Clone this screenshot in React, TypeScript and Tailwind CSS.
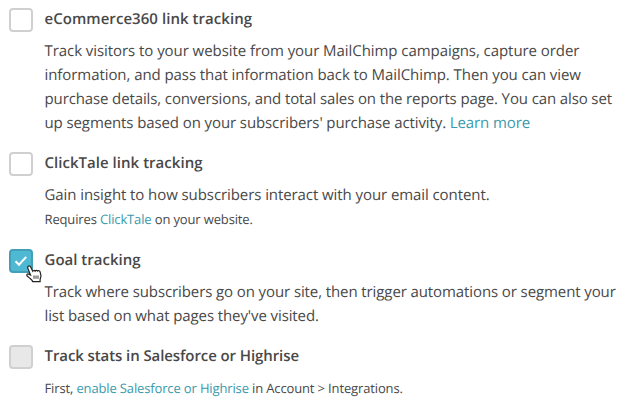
import React from 'react';

type CheckState = 'off' | 'on' | 'disabled';

const boxStyles: Record<CheckState, string> = {
  off: 'border-[#d0d0d0] bg-white',
  on: 'border-[#429fb5] bg-[#4fb8d3]',
  disabled: 'border-[#d0d0d0] bg-[#e8e8e8]',
};

function Checkbox({ state }: { state: CheckState }) {
  return (
    <span
      className={`relative mt-[8px] flex h-6 w-6 shrink-0 items-center justify-center rounded-[4px] border-2 ${boxStyles[state]}`}
    >
      {state === 'on' && (
        <svg viewBox="0 0 14 12" className="h-3 w-3.5" fill="none">
          <path d="M1.5 6.2 5 9.7 12.2 1.8" stroke="#fff" strokeWidth="2" />
        </svg>
      )}
      {state === 'on' && <HandCursor />}
    </span>
  );
}

function HandCursor() {
  return (
    <svg viewBox="0 0 16 18" className="absolute top-[14px] left-[15px] h-[18px] w-4">
      <path
        d="M2.2 1.2C3.2.6 4.2 1.1 4.7 2.1L6.7 6.2C7.2 5.3 8.5 5.2 9.1 6.1 9.7 5.1 11 5 11.6 6 12.4 5.3 13.8 5.7 14.1 6.9L14.9 10.3C15.2 12 14.2 13.3 14.1 14.8V16.6H6.7C6.4 14.9 4.6 13.8 3.1 12.6L1.2 11C.2 9.8 1.4 8.4 2.8 9.1L4.5 10 1.9 3.4C1.5 2.4 1.6 1.6 2.2 1.2Z"
        fill="#fff"
        stroke="#222"
        strokeWidth="1.2"
      />
      <path d="M8 10.5v3.3M10 10.5v3.3M12 10.5v3.3" stroke="#222" strokeWidth=".9" />
    </svg>
  );
}

interface OptionProps {
  title: string;
  state: CheckState;
  titleClass?: string;
  children: React.ReactNode;
}

function Option({ title, state, titleClass = '', children }: OptionProps) {
  return (
    <div className="mb-2 flex gap-3">
      <Checkbox state={state} />
      <div className="-ml-[0.5px] whitespace-nowrap">
        <h3 className={`mb-2 pt-[7px] text-[15px] leading-6 font-semibold ${titleClass}`}>{title}</h3>
        {children}
      </div>
    </div>
  );
}

function TextLink({ children }: { children: React.ReactNode }) {
  return <a className="text-[#3a9aab]">{children}</a>;
}

export default function App() {
  return (
    <main className="h-[404px] w-[624px] overflow-hidden bg-white pl-[9px] font-['Open_Sans',sans-serif] text-[15px] leading-6 text-[#484848] antialiased [text-rendering:geometricPrecision]">
      <Option title="eCommerce360 link tracking" state="off" titleClass="tracking-[0.05px]">
        <p className="mb-px">
          <span className="tracking-[-0.06px]">
            Track visitors to your website from your MailChimp campaigns, capture order
          </span>
          <br />
          <span className="tracking-[-0.07px]">
            information, and pass that information back to MailChimp. Then you can view
          </span>
          <br />
          <span className="tracking-[-0.12px]">
            purchase details, conversions, and total sales on the reports page. You can also set
          </span>
          <br />
          <span className="tracking-[-0.1px]">
            up segments based on your subscribers' purchase activity. <TextLink>Learn more</TextLink>
          </span>
        </p>
      </Option>
      <Option title="ClickTale link tracking" state="off" titleClass="tracking-[0.03px]">
        <p className="tracking-[-0.08px]">Gain insight to how subscribers interact with your email content.</p>
        <p className="mb-0.5 text-[13px] leading-6 tracking-[-0.14px]">
          Requires <TextLink>ClickTale</TextLink> on your website.
        </p>
      </Option>
      <Option title="Goal tracking" state="on">
        <p className="mb-px tracking-[-0.1px]">
          Track where subscribers go on your site, then trigger automations or segment your
          <br />
          list based on what pages they've visited.
        </p>
      </Option>
      <Option title="Track stats in Salesforce or Highrise" state="disabled" titleClass="tracking-[-0.09px]">
        <p className="text-[13px] leading-6 tracking-[-0.14px]">
          First, <TextLink>enable Salesforce or Highrise</TextLink> in Account &gt; Integrations.
        </p>
      </Option>
    </main>
  );
}
